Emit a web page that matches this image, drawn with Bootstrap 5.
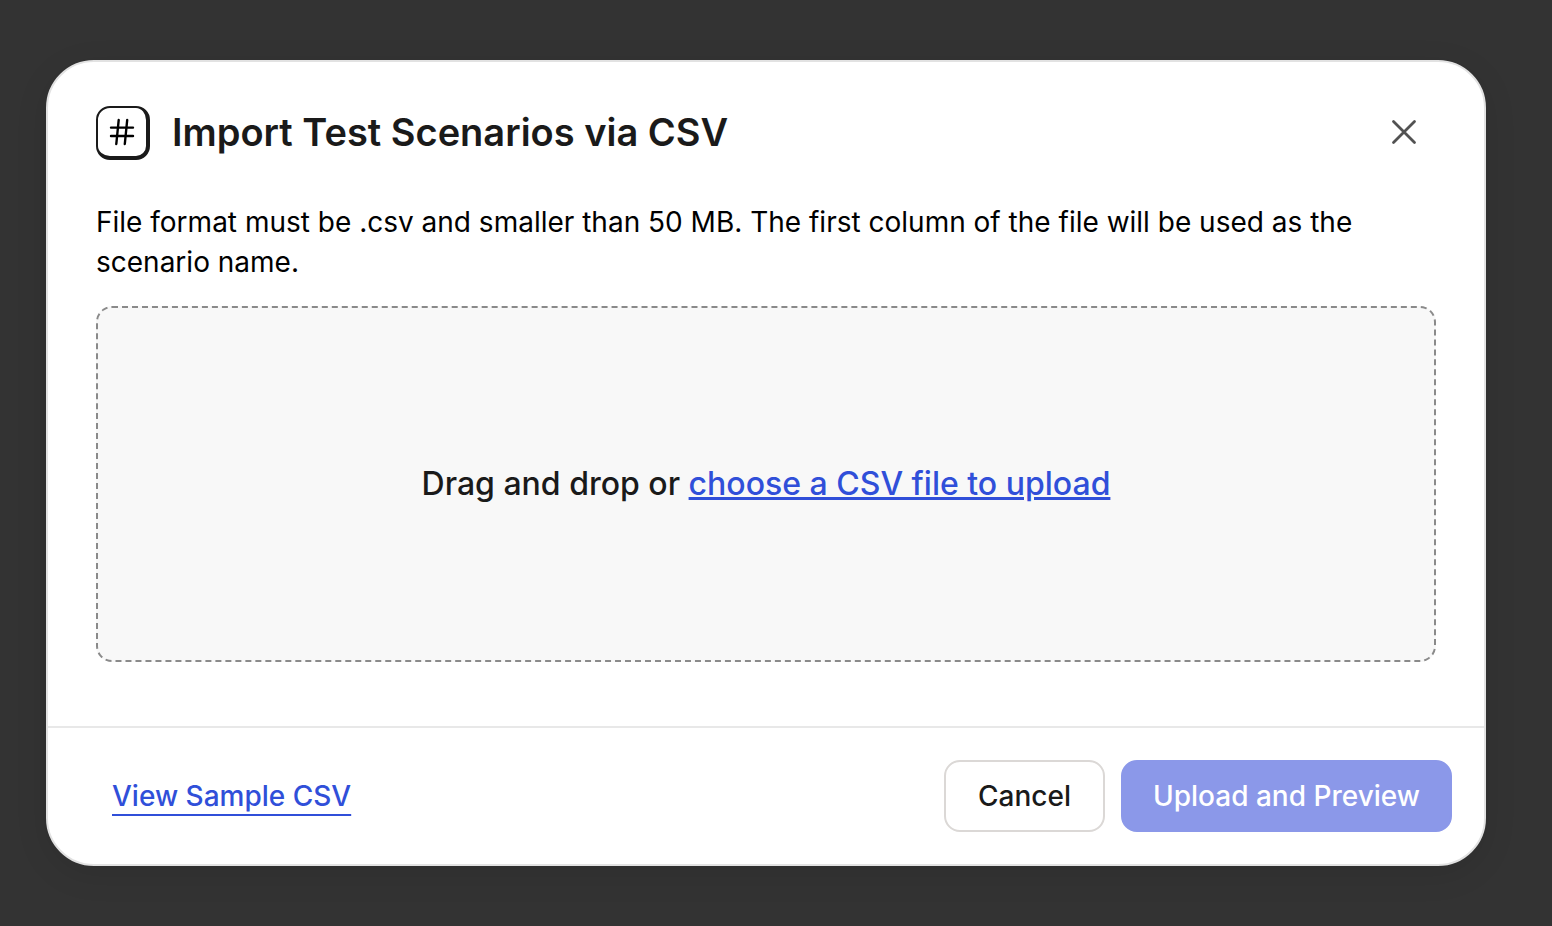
<!DOCTYPE html>
<html lang="en">
<head>
<meta charset="utf-8">
<meta name="viewport" content="width=device-width, initial-scale=1">
<title>Import Test Scenarios via CSV</title>
<link href="https://cdn.jsdelivr.net/npm/bootstrap@5.3.0/dist/css/bootstrap.min.css" rel="stylesheet">
<style>
  body { background: #333; color: #000; font-family: Inter, "Liberation Sans", sans-serif; font-size: 28px; line-height: 40px; }
  a { color: #304fd9; }
  .dialog-wrap { padding: 60px 66px 60px 46px; }
  .import-dialog { background: #fff; border: 2px solid #e2e2e2; border-radius: 48px; box-shadow: 0 8px 32px rgba(0, 0, 0, .1); }
  .dialog-main { padding: 44px 48px 64px; }
  .dialog-head { margin-bottom: 42px; gap: 22px; }
  .hash-tile { width: 54px; height: 54px; border: solid #1a1a1a; border-width: 2px 4px 4px 2px; border-radius: 14px; }
  .dialog-title { color: #1a1a1a; font-size: 38px; line-height: 52px; font-weight: 600; }
  .close-btn { width: 64px; height: 52px; color: #525252; }
  .drop-zone { min-height: 356px; margin-top: 24px; background: #f8f8f8; border: 2px dashed #8a8a8a; border-radius: 16px; color: #1a1a1a; font-size: 32px; font-weight: 500; }
  .drop-zone a { text-decoration-thickness: 3px; }
  .dialog-foot { border-top: 2px solid #e8e8e8; padding: 32px 32px 32px 64px; }
  .sample-link { font-weight: 500; text-decoration-thickness: 2px; text-underline-offset: 8px; text-decoration-skip-ink: none; }
  .dialog-foot .btn { --bs-btn-font-size: 28px; --bs-btn-line-height: 40px; --bs-btn-padding-x: 32px; --bs-btn-padding-y: 14px; --bs-btn-border-width: 2px; --bs-btn-border-radius: 16px; --bs-btn-font-weight: 500; }
  .btn-cancel { --bs-btn-color: #1a1a1a; --bs-btn-bg: #fff; --bs-btn-border-color: #dbd8d6; --bs-btn-hover-bg: #f8f8f8; }
  .dialog-foot .btn-upload { --bs-btn-padding-x: 30px; --bs-btn-disabled-color: #fff; --bs-btn-disabled-bg: #8b98e9; --bs-btn-disabled-border-color: #8b98e9; --bs-btn-disabled-opacity: 1; }
</style>
</head>
<body>
<div class="dialog-wrap">
  <section class="import-dialog" role="dialog" aria-labelledby="dialog-title">
    <div class="dialog-main">
      <header class="dialog-head d-flex align-items-start">
        <span class="hash-tile d-flex align-items-center justify-content-center flex-shrink-0">
          <svg width="28" height="28" viewBox="0 0 28 28" fill="none" stroke="#000" stroke-width="2.400" stroke-linecap="round" aria-hidden="true">
            <path d="M3 9.600h22M3 18h22M10.700 2 8.300 26M19.200 2l-2.400 24"/>
          </svg>
        </span>
        <h1 class="dialog-title mb-0 flex-grow-1" id="dialog-title">Import Test Scenarios via CSV</h1>
        <button type="button" class="close-btn btn p-0 border-0 d-flex align-items-center justify-content-center" aria-label="Close">
          <svg width="28" height="28" viewBox="0 0 28 28" fill="none" stroke="currentColor" stroke-width="2.800" stroke-linecap="round" aria-hidden="true">
            <path d="M3.500 3.500l21 21M24.500 3.500l-21 21"/>
          </svg>
        </button>
      </header>
      <p class="mb-0">File format must be .csv and smaller than 50 MB. The first column of the file will be used as the scenario name.</p>
      <div class="drop-zone d-flex align-items-center justify-content-center text-center">
        <p class="mb-0">Drag and drop or <a href="#">choose a CSV file to upload</a></p>
      </div>
    </div>
    <footer class="dialog-foot d-flex flex-wrap align-items-center justify-content-between gap-3">
      <a class="sample-link" href="#">View Sample CSV</a>
      <div class="d-flex flex-wrap gap-3">
        <button type="button" class="btn btn-cancel">Cancel</button>
        <button type="button" class="btn btn-upload" disabled>Upload and Preview</button>
      </div>
    </footer>
  </section>
</div>
<script src="https://cdn.jsdelivr.net/npm/bootstrap@5.3.0/dist/js/bootstrap.bundle.min.js"></script>
</body>
</html>
